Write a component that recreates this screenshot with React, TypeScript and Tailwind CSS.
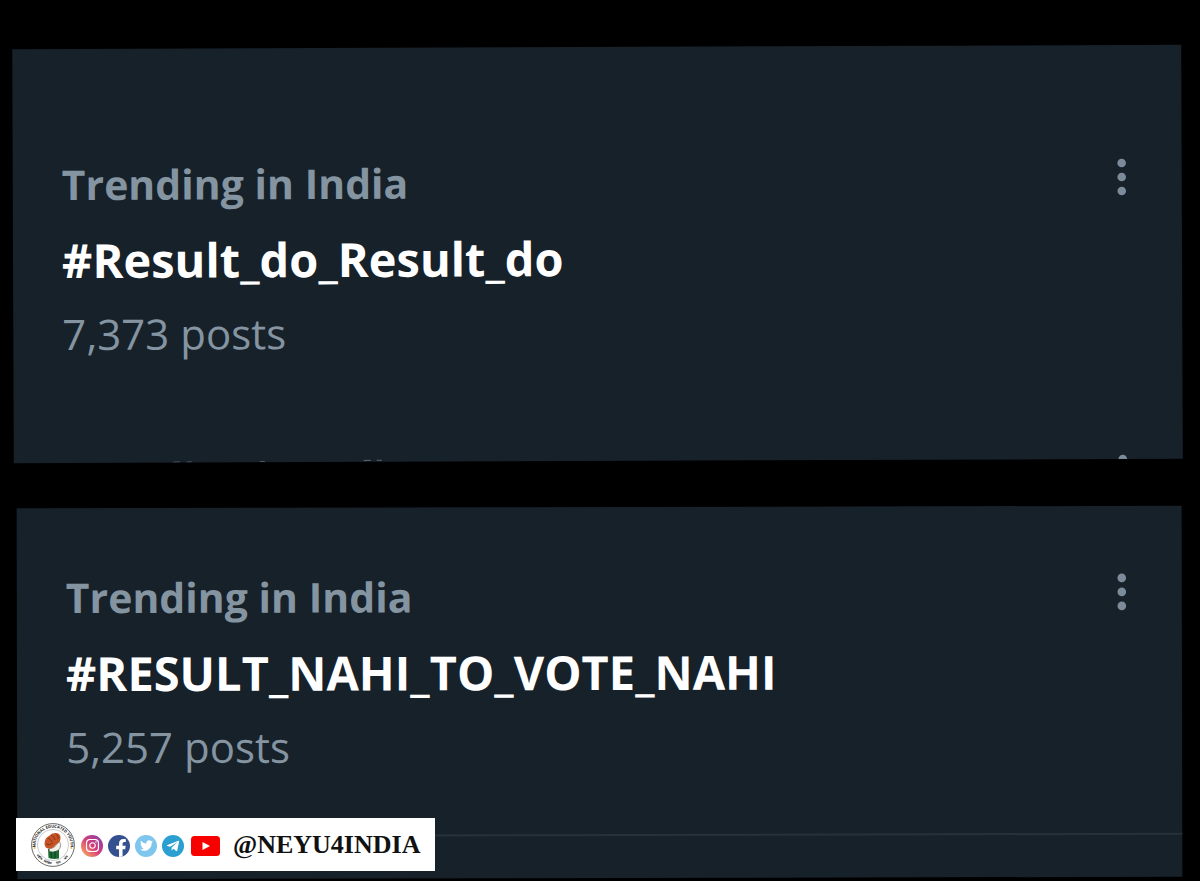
import React from "react";
import { FaFacebookF, FaInstagram, FaTelegramPlane, FaTwitter } from "react-icons/fa";

function MoreButton() {
  return (
    <button type="button" aria-label="More options" className="h-10 w-5 shrink-0">
      <svg viewBox="0 0 20 40" className="h-10 w-5 fill-[#7b8b99]">
        <circle cx="10" cy="6" r="4.3" />
        <circle cx="10" cy="20" r="4.3" />
        <circle cx="10" cy="34" r="4.3" />
      </svg>
    </button>
  );
}

function Trend({ tag, posts }: { tag: string; posts: string }) {
  return (
    <article className="flex items-start justify-between pr-[50px] pl-[49px]">
      <div className="whitespace-nowrap text-[#8494a1]">
        <p className="text-[41px] leading-[72px] font-bold">Trending in India</p>
        <h2 className="text-[47px] leading-[80px] font-bold text-white">{tag}</h2>
        <p className="text-[42px] leading-[68px]">{posts}</p>
      </div>
      <div className="pt-[13px]">
        <MoreButton />
      </div>
    </article>
  );
}

/* The upper edge of the following trend, just scrolling into view. */
function NextTrendEdge() {
  return (
    <div className="mt-[77px] flex h-[18px] items-end justify-between overflow-hidden pr-[50px] pl-[49px]">
      <svg viewBox="0 0 340 3" className="h-[3px] w-[340px] fill-[#5d6a75]" aria-hidden="true">
        <rect x="110" y="2" width="7" height="1" />
        <rect x="124" y="2" width="5" height="1" />
        <rect x="197" y="2" width="5" height="1" />
        <rect x="301" y="1" width="7" height="1" />
        <rect x="314" y="1" width="5" height="1" />
      </svg>
      <div className="h-[6px]">
        <MoreButton />
      </div>
    </div>
  );
}

function UnionLogo() {
  return (
    <svg viewBox="0 0 44 44" className="size-11 shrink-0" aria-hidden="true">
      <defs>
        <path id="ring-top" d="M4.600 25 A17.600 17.600 0 1 1 39.400 25" />
      </defs>
      <circle cx="22" cy="22" r="21.400" fill="#fff" stroke="#444" strokeWidth="0.8" />
      <circle cx="22" cy="22" r="15.600" fill="#fff" stroke="#999" strokeWidth="0.5" />
      <text className="fill-[#222] text-[4px] font-bold">
        <textPath href="#ring-top" startOffset="50%" textAnchor="middle">
          NATIONAL EDUCATED YOUTH
        </textPath>
      </text>
      <g className="fill-[#111] font-['Noto_Sans',sans-serif] text-[3px] font-bold">
        <text transform="rotate(48 22 22)" x="22" y="41" textAnchor="middle">राष्ट्रीय</text>
        <text transform="rotate(17 22 22)" x="22" y="41" textAnchor="middle">शिक्षित</text>
        <text transform="rotate(-17 22 22)" x="22" y="41" textAnchor="middle">युवा</text>
        <text transform="rotate(-46 22 22)" x="22" y="41" textAnchor="middle">संघ</text>
      </g>
      <circle cx="3.600" cy="25" r="1" fill="#e8c33a" />
      <circle cx="40.400" cy="25" r="1" fill="#e8c33a" />
      <path d="M17 26 L28 24 L28 35.500 Q22 36.500 17.500 35Z" fill="#1d6b35" />
      <path d="M18 25 Q24 27 28 17 Q31 22 29 25.500 Q25 30 18.500 28.500Z" fill="#f3efe9" stroke="#444" strokeWidth="0.5" />
      <path d="M13.500 21 Q13.500 15 18 13 Q21 9.500 25 10 Q30 10.500 29.500 16 Q28.500 20 25 21.500 Q22 26 18 25.500 Q14 25.500 13.500 21Z" fill="#c65325" />
      <path d="M17 15 Q20 16 21 19 M20.500 12.500 Q24 14 24 17 M25 11 Q28 13 27 16 M15 21 Q19 23 22 20" fill="none" stroke="#7e2c14" strokeWidth="0.8" />
      <path d="M20 29 L20.500 35 M24 28 L24 35" stroke="#0c3519" strokeWidth="0.9" />
    </svg>
  );
}

const round = "flex size-[22px] shrink-0 justify-center rounded-full text-white";

function HandleBar() {
  return (
    <footer className="absolute bottom-[10px] left-4 flex h-[53px] items-center bg-white px-[15px]">
      <UnionLogo />
      <div className="ml-[6px] flex items-center gap-[5px] pt-[2px]">
        <a href="#instagram" aria-label="Instagram" className={`${round} items-center bg-linear-to-tr from-[#f9b54a] via-[#d63a77] to-[#7d35ad]`}>
          <FaInstagram size={15} />
        </a>
        <a href="#facebook" aria-label="Facebook" className={`${round} items-end overflow-hidden bg-[#34508f]`}>
          <FaFacebookF size={18} className="ml-1" />
        </a>
        <a href="#twitter" aria-label="Twitter" className={`${round} items-center bg-[#7fc6ee]`}>
          <FaTwitter size={13} />
        </a>
        <a href="#telegram" aria-label="Telegram" className={`${round} items-center bg-[#2b9fd0]`}>
          <FaTelegramPlane size={14} />
        </a>
        <a href="#youtube" aria-label="YouTube" className="ml-[2px]">
          <svg viewBox="0 0 29 20" className="h-5 w-[29px]">
            <rect width="29" height="20" rx="3.500" fill="#f80000" />
            <path d="M11.500 6 L19 10 L11.500 14Z" fill="#fff" />
          </svg>
        </a>
      </div>
      <a href="#profile" className="ml-[13px] font-['Liberation_Serif',serif] text-[26px] leading-8 font-bold text-[#111]">
        @NEYU4INDIA
      </a>
    </footer>
  );
}

export default function App() {
  return (
    <main className="relative flex min-h-screen flex-col gap-[46px] overflow-hidden bg-black pt-[47px] pr-[18px] pb-[3px] font-['Open_Sans',sans-serif]">
      <section className="ml-[13px] rotate-[-0.22deg] bg-[#17212a] pt-[99px]">
        <Trend tag="#Result_do_Result_do" posts="7,373 posts" />
        <NextTrendEdge />
      </section>
      <section className="ml-[17px] grow rotate-[-0.12deg] bg-[#17212a] pt-[53px]">
        <Trend tag="#RESULT_NAHI_TO_VOTE_NAHI" posts="5,257 posts" />
        <hr className="mt-[54px] border-t-2 border-[#26323b]" />
      </section>
      <HandleBar />
    </main>
  );
}
